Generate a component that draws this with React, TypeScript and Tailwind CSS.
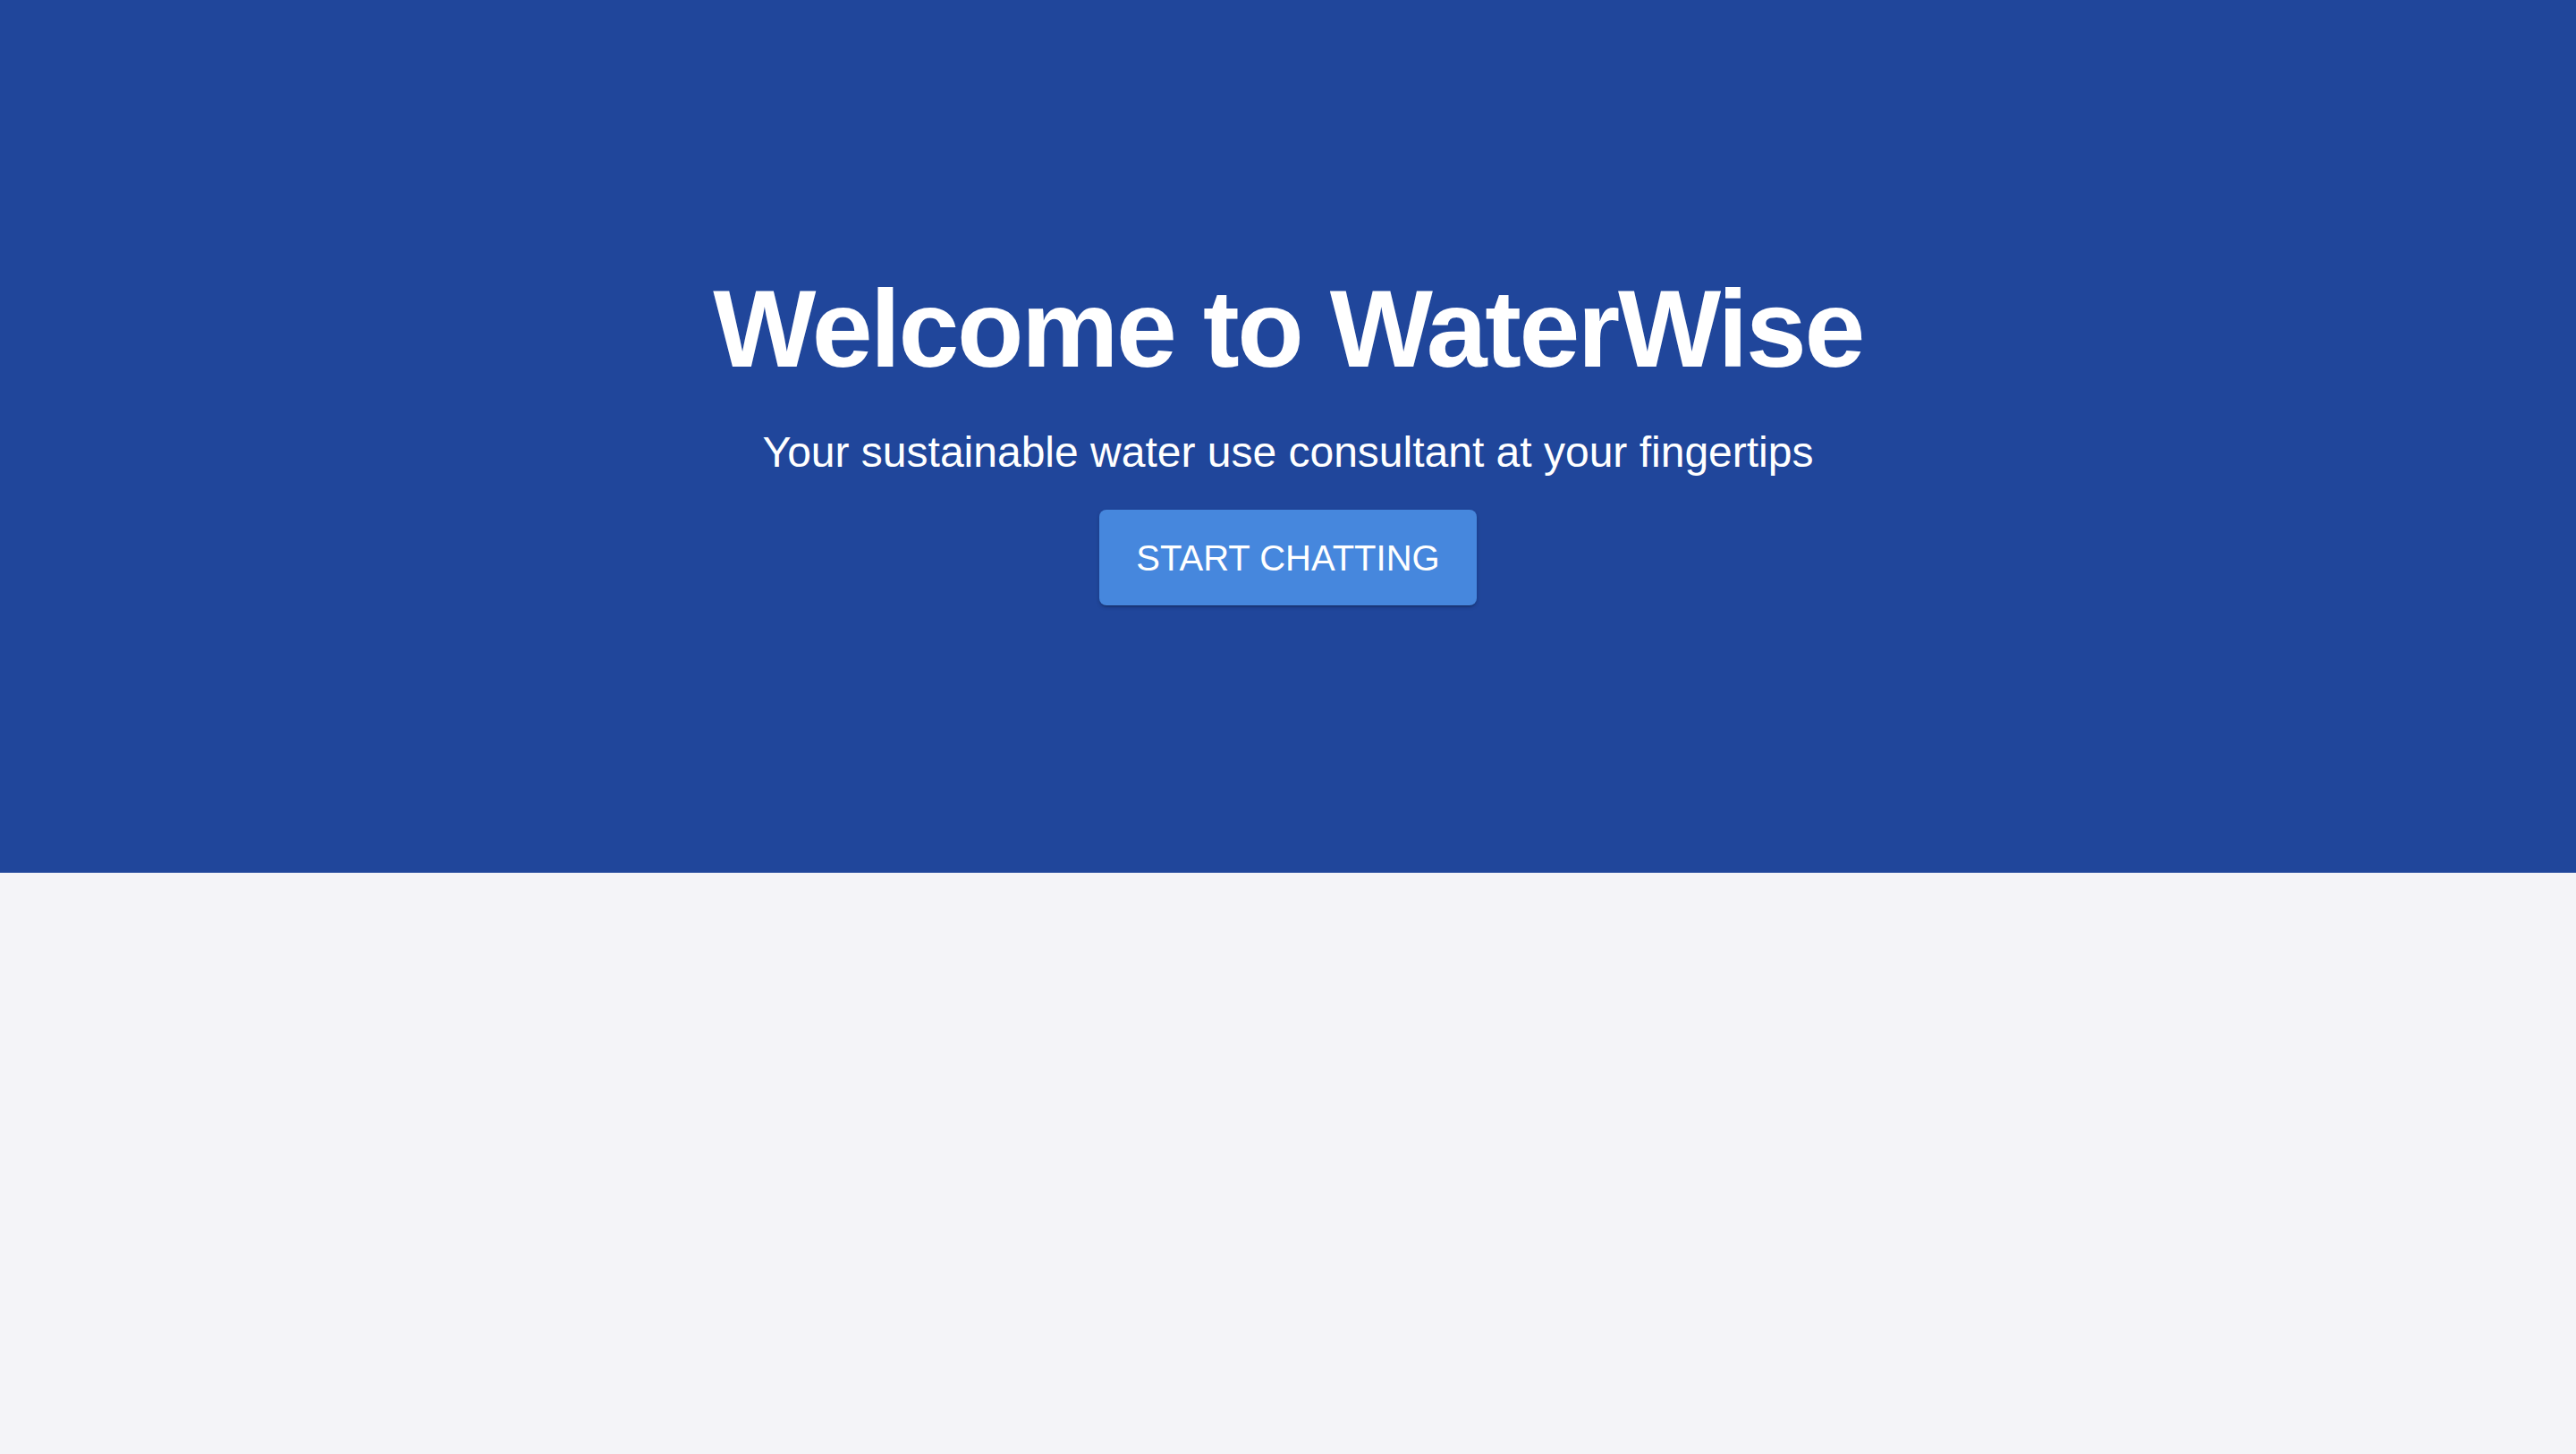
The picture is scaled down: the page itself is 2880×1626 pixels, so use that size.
export default function App() {
  return (
    <div className="min-h-screen bg-[#f4f4f8] font-['Liberation_Sans',Arial,sans-serif]">
      <section className="h-[976px] bg-[#20469b] flex flex-col items-center pt-[295px] text-white">
        <h1 className="text-[122px] leading-[1.2] font-bold tracking-[-0.02em]">Welcome to WaterWise</h1>
        <p className="mt-[29px] text-[48px] leading-[1.5]">Your sustainable water use consultant at your fingertips</p>
        <button className="mt-[28px] h-[107px] w-[422px] rounded-[8px] bg-[#4687dd] text-[40px] uppercase text-white shadow-[0_3px_2px_-2px_rgba(0,0,0,0.25),0_2px_4px_0_rgba(0,0,0,0.18)]">
          Start Chatting
        </button>
      </section>
    </div>
  );
}
